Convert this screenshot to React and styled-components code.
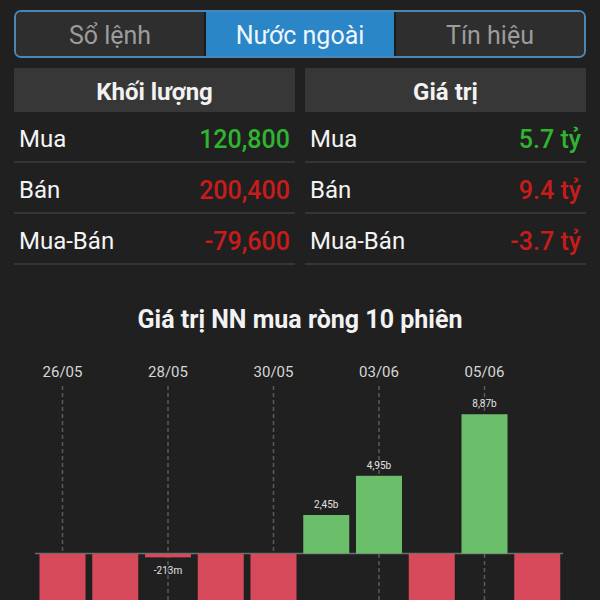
import React from "react";
import styled, { createGlobalStyle } from "styled-components";

const Global = createGlobalStyle`
  html, body { margin: 0; padding: 0; background: #202020; overflow: hidden; }
  body { font-family: Roboto, "Noto Sans", sans-serif; }
`;

const Page = styled.div`
  width: 600px;
  height: 600px;
  padding: 10px 14px 0;
  box-sizing: border-box;
  background: #202020;
`;

const Tabs = styled.div`
  display: flex;
  gap: 2px;
  height: 48px;
  box-sizing: border-box;
  border: 2px solid #4a87b6;
  border-radius: 7px;
  overflow: hidden;
  background: #1c1c1c;
`;

const Tab = styled.div`
  flex: 1;
  display: flex;
  align-items: center;
  justify-content: center;
  padding-top: 3px;
  font-size: 25px;
  color: ${(p) => (p.$active ? "#eef6fc" : "#9c9c9c")};
  background: ${(p) => (p.$active ? "#2a86c6" : "#2e2e2e")};
`;

const Panels = styled.div`
  display: grid;
  grid-template-columns: 1fr 1fr;
  gap: 10px;
  margin-top: 10px;
`;

const Panel = styled.div`
  display: flex;
  flex-direction: column;
`;

const PanelHeader = styled.div`
  height: 44px;
  box-sizing: border-box;
  padding-top: 4px;
  display: flex;
  align-items: center;
  justify-content: center;
  background: #373737;
  color: #f2f2f2;
  font-weight: 700;
  font-size: 24px;
`;

const Row = styled.div`
  height: 51px;
  box-sizing: border-box;
  border-bottom: 2px solid #353535;
  display: flex;
  align-items: center;
  justify-content: space-between;
  padding: 5px 5px 0 5px;
`;

const Label = styled.span`
  color: #f4f4f4;
  font-size: 24px;
`;

const Value = styled.span`
  font-size: 25px;
  font-weight: 500;
  color: ${(p) => (p.$tone === "up" ? "#2fb52f" : "#c81c1c")};
`;

const ChartTitle = styled.div`
  margin-top: 41px;
  text-align: center;
  color: #f2f2f2;
  font-weight: 700;
  font-size: 25px;
  line-height: 28px;
`;

const ChartSvg = styled.svg`
  display: block;
  margin: 7px 0 0 -14px;
`;

const tabs = ["Sổ lệnh", "Nước ngoài", "Tín hiệu"];

const panels = [
  {
    title: "Khối lượng",
    rows: [
      ["Mua", "120,800", "up"],
      ["Bán", "200,400", "down"],
      ["Mua-Bán", "-79,600", "down"],
    ],
  },
  {
    title: "Giá trị",
    rows: [
      ["Mua", "5.7 tỷ", "up"],
      ["Bán", "9.4 tỷ", "down"],
      ["Mua-Bán", "-3.7 tỷ", "down"],
    ],
  },
];

// chart data: value in billions
const bars = [
  { v: -5, date: "26/05" },
  { v: -5 },
  { v: -0.213, date: "28/05", label: "-213m" },
  { v: -5 },
  { v: -5, date: "30/05" },
  { v: 2.45, label: "2,45b" },
  { v: 4.95, date: "03/06", label: "4,95b" },
  { v: -5 },
  { v: 8.87, date: "05/06", label: "8,87b" },
  { v: -5 },
];

const Chart = () => {
  const top = 340;
  const base = 552.5 - top;
  const scale = 15.7;
  const step = 52.75;
  const x0 = 62.5;
  const w = 46;
  return (
    <ChartSvg width="600" height="260" viewBox="0 0 600 260">
      {bars.map((b, i) =>
        b.date ? (
          <g key={"d" + i}>
            <text
              x={x0 + i * step}
              y={36}
              textAnchor="middle"
              fill="#d6d6d6"
              fontSize="15"
              fontFamily="Roboto, sans-serif"
            >
              {b.date}
            </text>
            <line
              x1={x0 + i * step}
              x2={x0 + i * step}
              y1={45}
              y2={260}
              stroke="#5a5a5a"
              strokeWidth="1.5"
              strokeDasharray="4 3"
            />
          </g>
        ) : null
      )}
      <line x1="35" x2="563" y1={base} y2={base} stroke="#6e6e6e" strokeWidth="1.5" />
      {bars.map((b, i) => {
        const cx = x0 + i * step;
        const h = Math.abs(b.v) * scale;
        const y = b.v > 0 ? base - h : base + 0.5;
        return (
          <g key={"b" + i}>
            <rect
              x={cx - w / 2}
              y={y}
              width={w}
              height={Math.max(h, 3)}
              fill={b.v > 0 ? "#6cbf6a" : "#d64a5c"}
            />
            {b.label ? (
              <text
                x={cx}
                y={b.v > 0 ? y - 7 : base + 20}
                textAnchor="middle"
                fill="#e2e2e2"
                fontSize="10"
                fontFamily="Roboto, sans-serif"
              >
                {b.label}
              </text>
            ) : null}
          </g>
        );
      })}
    </ChartSvg>
  );
};

export default function App() {
  return (
    <Page>
      <Global />
      <Tabs>
        {tabs.map((t, i) => (
          <Tab key={t} $active={i === 1}>
            {t}
          </Tab>
        ))}
      </Tabs>
      <Panels>
        {panels.map((p) => (
          <Panel key={p.title}>
            <PanelHeader>{p.title}</PanelHeader>
            {p.rows.map(([l, v, tone]) => (
              <Row key={l}>
                <Label>{l}</Label>
                <Value $tone={tone}>{v}</Value>
              </Row>
            ))}
          </Panel>
        ))}
      </Panels>
      <ChartTitle>Giá trị NN mua ròng 10 phiên</ChartTitle>
      <Chart />
    </Page>
  );
}
